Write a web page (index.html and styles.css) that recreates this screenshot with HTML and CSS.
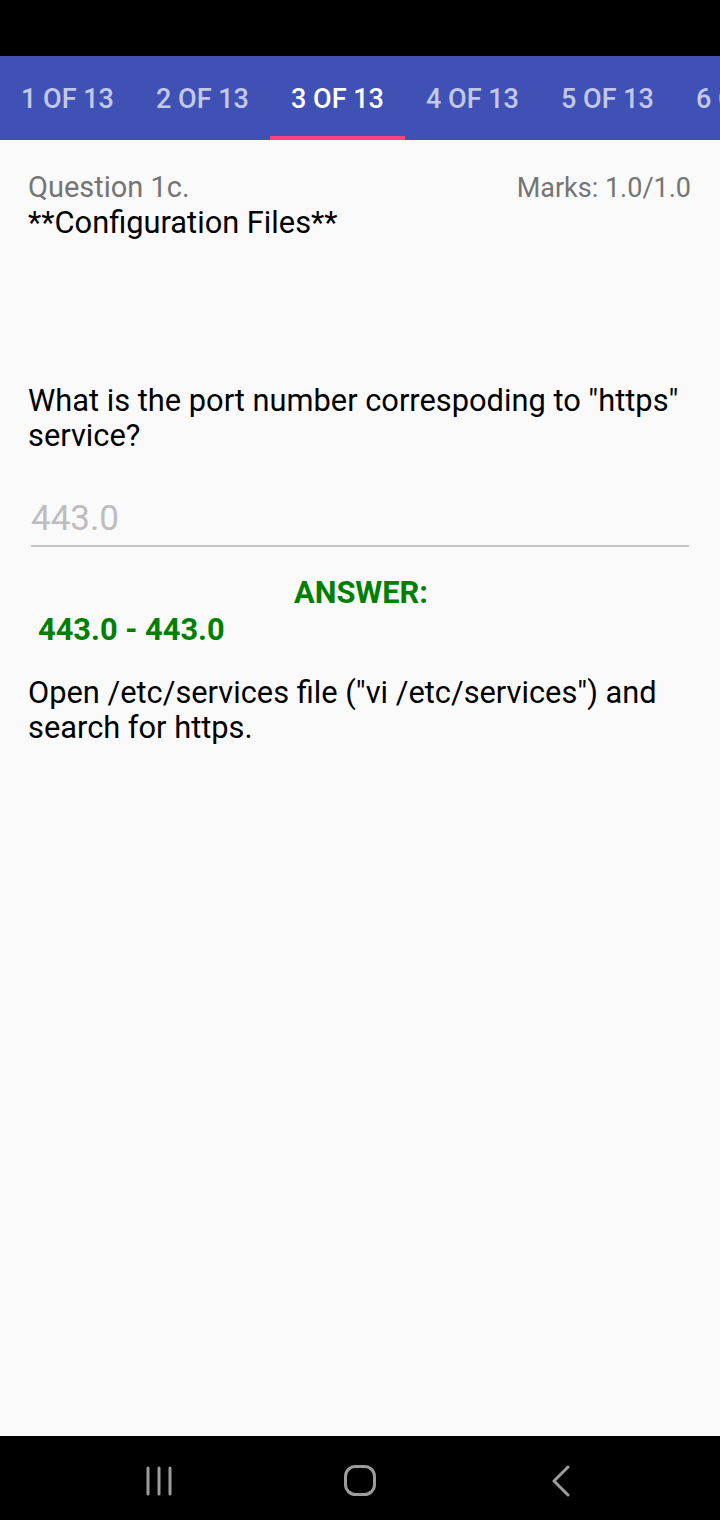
FILE: index.html
```html
<!DOCTYPE html>
<html>
<head>
<meta charset="utf-8">
<link rel="stylesheet" href="styles.css">
</head>
<body>
<div class="screen">
  <div class="statusbar"></div>
  <div class="tabs">
    <div class="tab">1 OF 13</div>
    <div class="tab">2 OF 13</div>
    <div class="tab active">3 OF 13</div>
    <div class="tab">4 OF 13</div>
    <div class="tab">5 OF 13</div>
    <div class="tab">6 OF 13</div>
  </div>
  <div class="content">
    <div class="head">
      <span class="qnum">Question 1c.</span>
      <span class="marks">Marks: 1.0/1.0</span>
    </div>
    <div class="title">**Configuration Files**</div>
    <div class="question">What is the port number correspoding to "https" service?</div>
    <div class="field"><span class="field-text">443.0</span></div>
    <div class="answer-label">ANSWER:</div>
    <div class="answer-value">443.0 - 443.0</div>
    <div class="explain">Open /etc/services file ("vi /etc/services") and search for https.</div>
  </div>
  <div class="navbar">
    <div class="slot">
      <svg width="28" height="30" viewBox="0 0 28 30"><g stroke="#9c9c9c" stroke-width="3" stroke-linecap="round"><line x1="3" y1="2" x2="3" y2="28"/><line x1="14" y1="2" x2="14" y2="28"/><line x1="25" y1="2" x2="25" y2="28"/></g></svg>
    </div>
    <div class="slot">
      <svg width="34" height="34" viewBox="0 0 34 34"><rect x="2.5" y="2.5" width="29" height="28" rx="10" ry="10" fill="none" stroke="#9c9c9c" stroke-width="3"/></svg>
    </div>
    <div class="slot">
      <svg width="20" height="32" viewBox="0 0 20 32"><polyline points="17,2 3,16 17,30" fill="none" stroke="#9c9c9c" stroke-width="3" stroke-linecap="round" stroke-linejoin="round"/></svg>
    </div>
  </div>
</div>
</body>
</html>
```

FILE: styles.css
```css
* { box-sizing: border-box; }
html, body {
  margin: 0;
  padding: 0;
  background: #fafafa;
}
body {
  font-family: Roboto, "Liberation Sans", sans-serif;
}
.screen {
  width: 720px;
  height: 1520px;
  display: flex;
  flex-direction: column;
  overflow: hidden;
  background: #fafafa;
}
.statusbar {
  height: 56px;
  background: #000;
  flex: none;
}
.tabs {
  height: 84px;
  flex: none;
  background: #3f51b5;
  display: flex;
  overflow: hidden;
}
.tab {
  flex: none;
  width: 135px;
  height: 84px;
  display: flex;
  align-items: center;
  justify-content: center;
  font-size: 27px;
  font-weight: 500;
  color: rgba(255, 255, 255, 0.7);
  white-space: nowrap;
  border-bottom: 4px solid transparent;
  padding-top: 6px;
}
.tab.active {
  color: #fff;
  border-bottom-color: #ff4081;
}
.content {
  flex: 1;
  padding: 30px 29px 0 28px;
  display: flex;
  flex-direction: column;
}
.head {
  display: flex;
  justify-content: space-between;
  align-items: baseline;
  line-height: 35px;
  color: #757575;
}
.qnum {
  font-size: 29px;
}
.marks {
  font-size: 27px;
}
.title {
  margin-top: -1px;
  font-size: 30.8px;
  line-height: 35px;
  color: #000;
}
.question {
  margin-top: 143px;
  font-size: 30.8px;
  line-height: 35px;
  color: #000;
}
.field {
  margin: 30px 2px 0 3px;
  height: 64px;
  border-bottom: 2px solid #c4c4c4;
  display: flex;
  align-items: flex-end;
  padding-left: 0;
  padding-bottom: 6px;
}
.field-text {
  font-size: 35px;
  color: #bdbdbd;
  line-height: 40px;
}
.answer-label {
  margin-top: 27px;
  text-align: center;
  font-size: 30.8px;
  line-height: 37px;
  font-weight: 700;
  color: #008000;
  padding-left: 3px;
}
.answer-value {
  padding-left: 10px;
  font-size: 30.8px;
  line-height: 37px;
  font-weight: 700;
  color: #008000;
}
.explain {
  margin-top: 27px;
  font-size: 30.8px;
  line-height: 35px;
  color: #000;
}
.navbar {
  height: 84px;
  flex: none;
  background: #000;
  display: flex;
  justify-content: center;
  align-items: center;
  padding-top: 6px;
}
.slot {
  width: 201px;
  display: flex;
  justify-content: center;
  align-items: center;
}
```
